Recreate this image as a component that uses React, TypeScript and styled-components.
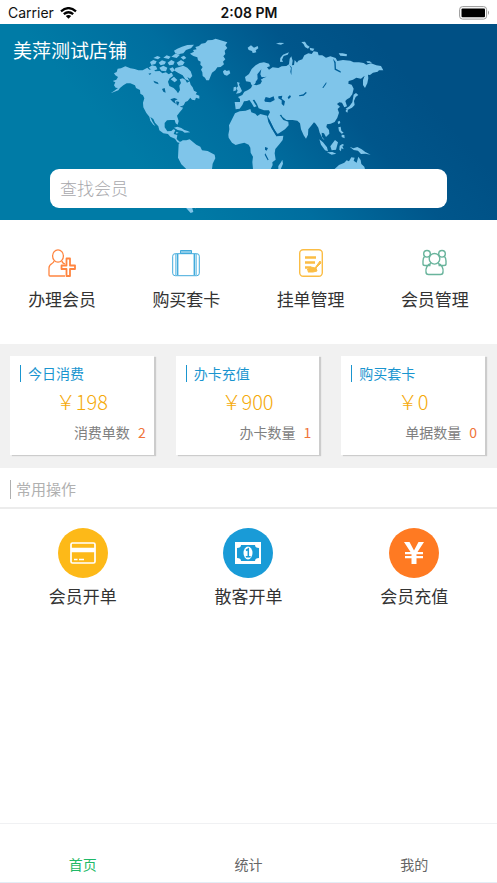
import React from "react";
import styled, { createGlobalStyle } from "styled-components";

const GlobalStyle = createGlobalStyle`
  * { box-sizing: border-box; }
  body {
    margin: 0;
    background: #fff;
    color: #333;
    font-family: "Noto Sans CJK SC", sans-serif;
    font-weight: 400;
  }
  a { color: inherit; text-decoration: none; }
`;

const Page = styled.div`
  display: flex;
  flex-direction: column;
  min-height: 100vh;
`;

const StatusBar = styled.div`
  display: grid;
  grid-template-columns: 1fr auto 1fr;
  align-items: center;
  height: 24px;
  padding: 2px 7px 0 8px;
  color: #111;
  font: 400 14px/20px Inter, sans-serif;
`;

const Carrier = styled.span`
  display: flex;
  align-items: center;
  gap: 6px;
`;

const Clock = styled.time`
  font-weight: 600;
`;

const BatteryIcon = styled.svg`
  justify-self: end;
`;

const Banner = styled.header`
  position: relative;
  display: flex;
  flex-direction: column;
  justify-content: space-between;
  height: 196px;
  padding: 12px 50px 12px 13px;
  background: linear-gradient(49deg, #007ba6 28%, #006e9f 47%, #00568b 66%, #005085 80%);
`;

const WorldMap = styled.svg`
  position: absolute;
  inset: 0;
  width: 100%;
  height: 100%;
`;

const ShopName = styled.h1`
  position: relative;
  margin: 0;
  color: #fff;
  font-size: 19px;
  line-height: 28px;
  font-weight: 400;
`;

const Search = styled.input`
  position: relative;
  height: 39px;
  margin-left: 37px;
  padding: 0 10px 3px;
  border: 0;
  border-radius: 9px;
  background: #fff;
  color: #333;
  font: inherit;
  font-size: 17px;
  font-weight: 300;
  &::placeholder { color: #a8a8ac; opacity: 1; }
`;

const Shortcuts = styled.nav`
  display: grid;
  grid-template-columns: repeat(4, 1fr);
  height: 124px;
  padding-top: 29px;
`;

const Action = styled.a`
  display: flex;
  flex-direction: column;
  align-items: center;
  gap: 10px;
  font-size: 17px;
  line-height: 24px;
`;

const Summary = styled.section`
  display: grid;
  grid-template-columns: repeat(3, 1fr);
  padding: 12px 0 13px;
  background: #f1f1f1;
`;

const Card = styled.article`
  display: flex;
  flex-direction: column;
  margin: 0 12px 0 10px;
  height: 99px;
  padding: 7px 7px 0 10px;
  background: #fff;
  box-shadow: 2px 1px 1px #ccc;
`;

const CardTitle = styled.h2`
  margin: 0;
  display: flex;
  align-items: center;
  gap: 7px;
  color: #1a95cf;
  font-size: 14px;
  line-height: 20px;
  font-weight: 400;
  &::before { content: ""; width: 1px; height: 17px; background: currentColor; }
`;

const Amount = styled.div`
  margin-top: 4px;
  padding-right: 3px;
  color: #f5aa0a;
  font-size: 20px;
  line-height: 30px;
  font-weight: 300;
  text-align: center;
`;

const CountRow = styled.div`
  display: flex;
  justify-content: flex-end;
  gap: 8px;
  margin-top: 5px;
  padding-right: 1px;
  color: #808080;
  font-size: 14px;
  line-height: 20px;
`;

const Count = styled.span`
  color: #f0743a;
`;

const SectionTitle = styled.h2`
  display: flex;
  align-items: center;
  gap: 5px;
  margin: 0;
  height: 41px;
  padding: 3px 10px 0;
  border-bottom: 2px solid #ececec;
  color: #b0b0b0;
  font-size: 15px;
  line-height: 22px;
  font-weight: 400;
  &::before { content: ""; width: 1px; height: 19px; background: currentColor; }
`;

const Operations = styled.nav`
  display: grid;
  grid-template-columns: repeat(3, 1fr);
  padding-top: 19px;
`;

const Operation = styled(Action)`
  gap: 6px;
`;

const Disc = styled.span<{ $color: string }>`
  display: grid;
  place-items: center;
  width: 50px;
  height: 50px;
  border-radius: 50%;
  background: ${(p) => p.$color};
`;

const TabBar = styled.nav`
  display: grid;
  grid-template-columns: repeat(3, 1fr);
  height: 60px;
  margin-top: auto;
  padding-top: 30px;
  border-top: 1px solid #f0f1f3;
  border-bottom: 1px solid #e3edf5;
`;

const Tab = styled.a<{ $active?: boolean }>`
  color: ${(p) => (p.$active ? "#1fb968" : "#666")};
  font-size: 14px;
  line-height: 20px;
  text-align: center;
`;

const Continents = () => (
  <WorldMap viewBox="0 24 497 196" preserveAspectRatio="xMidYMid slice" aria-hidden="true">
    <g fill="#7fc5ea" transform="translate(100 30) scale(.3333)">
      <path d="M42 130 50 126 53 116 63 115 76 109 91 115 104 117 115 121 128 121 142 113 148 119 158 116 166 124 179 123 187 130 198 127 206 133 216 128 218 139 209 145 204 155 208 168 221 174 229 182 234 190 240 180 238 167 243 159 239 148 248 145 256 149 261 158 269 154 272 164 278 172 282 182 291 187 287 193 298 197 298 206 288 203 285 211 276 209 271 203 263 213 256 216 251 226 247 229 248 236 239 247 231 257 236 273 233 284 227 280 224 270 212 270 201 271 194 279 194 292 202 304 214 303 220 298 226 300 221 312 232 315 230 327 239 335 248 334 242 340 232 337 225 326 211 320 204 312 190 310 178 301 175 289 165 278 160 267 151 261 158 276 166 288 160 284 151 272 148 260 139 249 130 232 129 218 133 205 129 196 121 191 120 180 108 174 105 166 91 160 80 160 70 166 60 174 55 181 32 190 42 183 54 174 47 173 42 166 46 157 38 153 49 149 54 141 46 136Z" />
      <path d="M270 71 282 65 279 60 290 58 286 51 297 48 304 41 316 39 323 31 337 30 347 26 362 31 382 37 376 46 382 54 374 62 376 72 370 79 376 88 369 95 372 103 362 111 352 112 346 121 336 128 332 138 327 151 319 151 315 143 308 138 307 127 303 119 308 111 301 104 302 95 294 91 292 82 280 78Z" />
      <path d="M369 124 375 119 380 123 388 121 391 130 381 137 373 134 370 129ZM222 293 232 290 244 294 253 300 263 303 271 307 254 308 247 303 233 300ZM228 305 236 308 229 311Z" />
      <path d="M150 96 160 90 170 94 166 102 154 105ZM146 113 156 106 168 109 172 118 160 122ZM160 84 172 78 182 82 174 88ZM176 98 186 91 198 95 194 103 182 106ZM178 113 190 107 202 113 198 124 184 122ZM190 83 200 76 212 80 206 87ZM203 98 214 90 224 95 220 104 208 106ZM214 80 226 71 240 74 230 84ZM222 62 232 56 246 50 262 45 282 44 273 55 258 60 250 70 234 73 226 70ZM230 98 243 90 254 97 248 106 236 107ZM242 82 252 77 259 84 250 89ZM235 112 250 107 262 113 272 124 277 138 270 146 262 141 268 153 256 148 248 136 235 129 224 122 226 114ZM208 116 218 112 225 121 216 127ZM212 148 222 140 232 150 224 157ZM205 134 212 130 220 136 211 141Z" />
      <path d="M236 342 248 331 259 331 269 328 278 335 289 344 301 350 306 361 323 363 344 374 346 385 338 401 336 418 319 446 295 486 286 523 296 532 287 535 276 531 280 546 272 549 259 535 255 480 258 416 244 403 234 383Z" />
      <path fill="#03689b" d="M160 152 173 157 176 163 164 159ZM186 177 194 174 197 188 190 185ZM211 208 223 204 233 208 224 212 228 222 219 216ZM229 214 238 216 234 227 229 222ZM239 230 252 226 246 232ZM145 131 154 129 150 135Z" />
    </g>
    <g fill="#7fc5ea" transform="translate(225 30) scale(.3333)">
      <path d="M29 216 45 216 45 207 39 201 52 195 58 185 69 180 78 174 82 166 78 160 84 158 86 164 94 166 106 162 111 153 107 149 116 143 108 142 99 151 94 155 89 163 80 166 76 156 63 154 60 141 72 132 80 117 92 106 104 99 117 97 132 101 135 109 126 112 132 119 143 112 160 114 170 109 184 108 192 103 194 86 199 79 203 92 201 106 207 105 209 90 216 98 220 92 232 88 238 76 250 70 260 72 266 64 278 66 281 76 292 76 303 83 316 79 332 84 337 93 354 90 376 92 386 97 402 97 416 99 424 104 438 100 454 106 468 108 475 121 462 121 458 125 444 128 435 135 429 134 430 145 427 160 420 174 414 165 414 150 419 137 408 146 394 143 384 149 371 153 370 161 380 164 386 176 382 193 374 203 366 208 361 213 366 229 358 232 351 218 343 217 336 222 345 230 338 237 342 248 337 263 329 276 317 281 306 283 304 291 312 300 313 311 303 321 297 310 290 308 291 320 299 331 293 326 284 308 280 293 272 281 267 277 258 288 250 298 249 314 243 326 236 316 228 298 225 280 217 272 203 270 184 270 172 260 169 254 164 255 175 270 190 275 191 286 180 298 164 308 157 315 152 306 141 284 128 260 135 247 132 241 117 241 101 235 96 222 88 209 83 210 90 222 95 229 87 232 80 220 73 210 66 213 57 214 52 225 44 236 32 238Z" />
      <path d="M30 250 44 244 62 242 76 237 79 247 91 251 97 258 106 252 126 257 130 276 139 293 147 306 155 319 175 317 173 330 163 343 151 357 149 370 152 389 142 397 143 405 137 418 84 418 82 396 84 380 77 368 76 353 71 344 58 338 42 342 32 345 21 338 11 323 10 314 13 298 12 286 20 270ZM160 408 168 397 172 389 174 401 167 418 160 418Z" />
      <path d="M36 156 44 158 42 164 47 174 51 183 45 189 33 191 38 182 34 174 39 169ZM26 172 33 170 34 181 25 184ZM165 95 166 84 174 74 192 67 188 74 176 78 171 89 174 96ZM68 53 78 46 87 53 98 48 100 55 92 61 94 67 83 69 81 63 71 60ZM153 41 163 38 178 39 168 44ZM229 36 240 35 246 45 254 50 249 56 240 51 236 43ZM254 53 268 56 264 63 256 61ZM341 70 353 70 366 73 365 79 346 77ZM424 94 434 94 441 98 428 99ZM386 194 393 189 400 195 392 201 387 213 389 225 381 233 367 240 362 236 373 229 382 217ZM363 239 369 241 367 248 362 244ZM338 275 344 272 346 279 340 283ZM340 292 347 290 349 302 356 308 350 311 342 303ZM350 314 358 315 359 325 350 321ZM283 328 294 337 306 352 309 364 300 361 288 344ZM306 367 322 366 334 371 320 374ZM316 349 330 330 339 337 333 359 320 361ZM344 347 352 342 358 345 352 348 356 358 349 355 348 364 343 359ZM374 350 385 355 397 351 410 358 421 366 437 374 421 371 408 372 399 362 386 360Z" />
      <path d="M328 418 342 405 358 398 365 391 372 394 379 382 389 383 386 392 395 398 400 380 407 390 409 402 418 410 420 418Z" />
      <path fill="#00609a" d="M91 157 98 147 97 133 109 118 106 133 110 142 125 140 108 147 100 158ZM118 211 122 201 134 204 146 199 149 210 136 217 120 215ZM160 199 172 197 170 206 180 214 177 228 170 222 170 211 160 205ZM188 202 195 195 198 200 191 208ZM222 196 235 193 243 185 245 189 236 197 223 199ZM292 173 304 156 304 161 295 174ZM324 86 332 96 333 116 347 124 347 128 329 119 328 99ZM193 105 200 112 199 136 196 125 198 114ZM129 260 136 274 145 294 157 311 167 310 172 315 154 319 140 295 132 277ZM120 351 129 354 125 362 120 359ZM121 370 131 389 128 391 119 374Z" />
    </g>
  </WorldMap>
);

const MemberAddIcon = () => (
  <svg width="28" height="28" viewBox="0 0 28 28" fill="none" stroke="#ff8540" strokeWidth="1.3" strokeLinejoin="round" aria-hidden="true">
    <ellipse cx="10" cy="7" rx="5.4" ry="6.2" />
    <path d="M6 12c0 3-5 2-5 7v7q0 1 1 1h15M14 12q0 2 3 3" />
    <path strokeWidth="1.8" d="M18.500 9.500h3.500v7h5v3.500h-5v7h-3.500v-7h-5v-3.500h5z" />
  </svg>
);

const SuitcaseIcon = () => (
  <svg width="28" height="28" viewBox="0 0 28 28" fill="none" stroke="#42abdc" aria-hidden="true">
    <rect x=".7" y="4.700" width="26.600" height="22" rx="2.500" strokeWidth="1" />
    <path fill="#8bcbe8" d="M8.500 4.500V1.500h11v3Z" />
    <path strokeWidth="1.800" d="M5.500 5v21M22.500 5v21" />
    <path strokeWidth=".6" d="M3.500 5v21M24.500 5v21" />
  </svg>
);

const OrderIcon = () => (
  <svg width="28" height="28" viewBox="0 0 28 28" fill="none" stroke="#fbbd45" aria-hidden="true">
    <rect x="2.700" y=".700" width="22.600" height="26.600" rx="3.500" strokeWidth="1.400" />
    <path strokeWidth="2.600" d="M8 8.500h11M8 13.500h10M8 18.500h6" />
    <path fill="#fbbd45" strokeWidth="1" d="m23 12 1 2-5 5 1 3-4 1h-5l1-2-2 0 4-3 4 1Z" />
  </svg>
);

const MembersIcon = () => (
  <svg width="28" height="28" viewBox="0 0 28 28" fill="none" stroke="#69b49c" strokeWidth="1.400" aria-hidden="true">
    <circle cx="6" cy="4.800" r="3.300" />
    <circle cx="21" cy="4.800" r="3.300" />
    <circle cx="13.500" cy="9.800" r="5.300" />
    <path d="M3.500 7.500Q2 9 2 12v3q0 1.500 2 1.500h5.500M23.500 7.500Q25 9 25 12v3q0 1.500-2 1.500h-5.500M10 14.500c-4 1-5.500 5-5 8.500q0 2.500 2.500 2.500h12q2.500 0 2.500-2.500c.5-3.500-1-7.500-5-8.500" />
  </svg>
);

const BankCardIcon = () => (
  <svg width="26" height="22" viewBox="0 0 26 22" fill="none" stroke="#fff" aria-hidden="true">
    <rect x="1" y="1" width="24" height="20" rx="1.500" strokeWidth="1.700" />
    <path strokeWidth="4.500" d="M1 8h24" />
    <path strokeWidth="1.400" d="M4 17.500h3.500M9 17.500h5" />
  </svg>
);

const CashIcon = () => (
  <svg width="26" height="22" viewBox="0 0 26 22" aria-hidden="true">
    <path fill="#fff" fillRule="evenodd" d="M0 0h26v22H0ZM6 3Q6 6 2 6v10q4 0 4 3h14q0-3 4-3V6q-4 0-4-3Z" />
    <ellipse cx="13" cy="11" rx="4.500" ry="6.500" fill="#fff" />
    <path fill="none" stroke="#199bd7" strokeWidth="1.500" d="m11 8.500 2.300-1.500v7.500M10.800 14.800h4.800" />
  </svg>
);

const YuanIcon = () => (
  <svg width="22" height="22" viewBox="0 0 22 22" aria-hidden="true">
    <path fill="#fff" d="M1 0h5.500L11 8.500 15.500 0H21l-6.500 10H20v2.300h-6.500v1.700H20v2.300h-6.500V22h-5v-5.700H2V14h6.500v-1.700H2V10h5.500Z" />
  </svg>
);

const shortcuts = [
  { label: "办理会员", icon: <MemberAddIcon /> },
  { label: "购买套卡", icon: <SuitcaseIcon /> },
  { label: "挂单管理", icon: <OrderIcon /> },
  { label: "会员管理", icon: <MembersIcon /> },
];

const cards = [
  { title: "今日消费", amount: "￥198", label: "消费单数", count: 2 },
  { title: "办卡充值", amount: "￥900", label: "办卡数量", count: 1 },
  { title: "购买套卡", amount: "￥0", label: "单据数量", count: 0 },
];

const operations = [
  { label: "会员开单", color: "#fdb918", icon: <BankCardIcon /> },
  { label: "散客开单", color: "#199bd7", icon: <CashIcon /> },
  { label: "会员充值", color: "#ff7a22", icon: <YuanIcon /> },
];

export default function App() {
  return (
    <Page>
      <GlobalStyle />
      <StatusBar>
        <Carrier>
          Carrier
          <svg width="17" height="12" viewBox="0 0 17 12" fill="none" stroke="#000" strokeWidth="2.300" aria-hidden="true">
            <path d="M1 4.300q7.500-6.300 15 0M3.800 7.200q4.700-4 9.400 0" />
            <path fill="#000" stroke="none" d="M5.800 9q2.700-2.200 5.400 0L8.500 11.800Z" />
          </svg>
        </Carrier>
        <Clock>2:08 PM</Clock>
        <BatteryIcon width="31" height="14" viewBox="0 0 31 14" role="img" aria-label="Battery full">
          <rect x=".6" y=".6" width="27" height="12.500" rx="3" fill="none" stroke="#999" />
          <rect x="2.500" y="2.500" width="23.500" height="8.800" rx="1" />
          <path fill="#999" d="M29 4.500q2 2 0 4.500z" />
        </BatteryIcon>
      </StatusBar>
      <Banner>
        <Continents />
        <ShopName>美萍测试店铺</ShopName>
        <Search type="search" placeholder="查找会员" aria-label="查找会员" />
      </Banner>
      <main>
        <Shortcuts>
          {shortcuts.map((s) => (
            <Action href="#" key={s.label}>
              {s.icon}
              {s.label}
            </Action>
          ))}
        </Shortcuts>
        <Summary>
          {cards.map((c) => (
            <Card key={c.title}>
              <CardTitle>{c.title}</CardTitle>
              <Amount>{c.amount}</Amount>
              <CountRow>
                {c.label}
                <Count>{c.count}</Count>
              </CountRow>
            </Card>
          ))}
        </Summary>
        <SectionTitle>常用操作</SectionTitle>
        <Operations>
          {operations.map((o) => (
            <Operation href="#" key={o.label}>
              <Disc $color={o.color}>{o.icon}</Disc>
              {o.label}
            </Operation>
          ))}
        </Operations>
      </main>
      <TabBar>
        <Tab href="#" $active aria-current="page">首页</Tab>
        <Tab href="#">统计</Tab>
        <Tab href="#">我的</Tab>
      </TabBar>
    </Page>
  );
}
